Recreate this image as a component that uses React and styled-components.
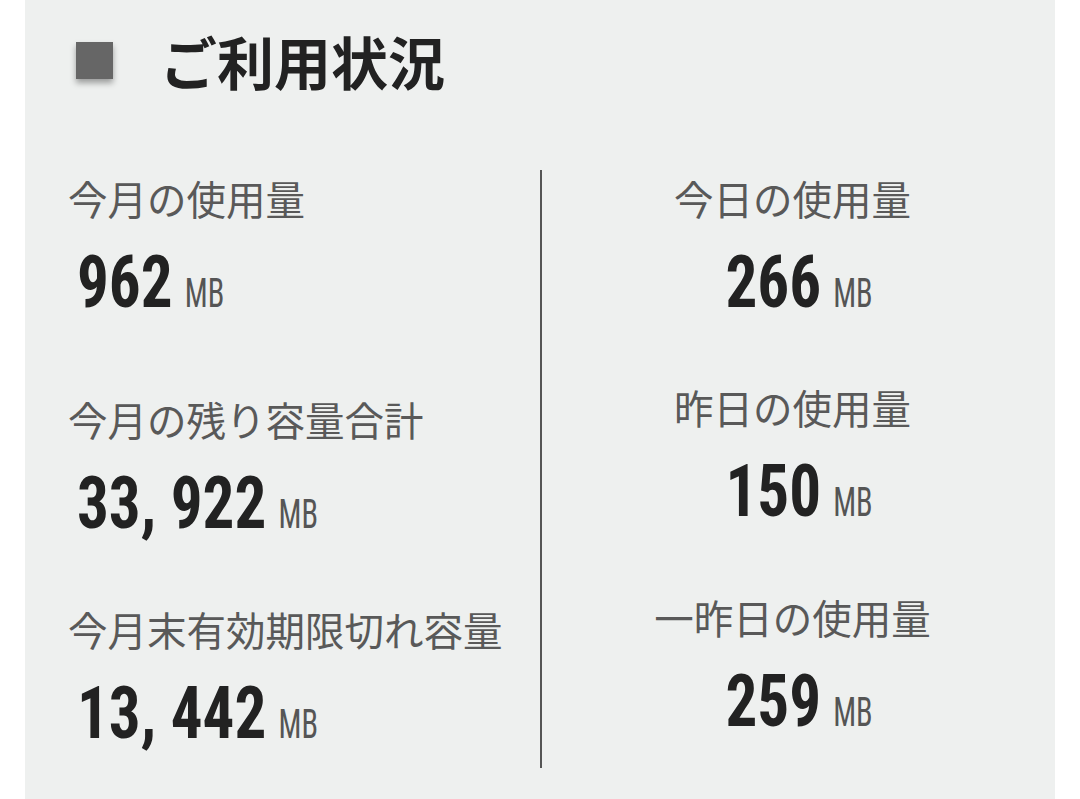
import React from 'react'
import styled, { createGlobalStyle } from 'styled-components'

const GlobalStyle = createGlobalStyle`
  html, body {
    margin: 0;
    padding: 0;
    background: #ffffff;
  }
  body {
    font-family: "Noto Sans CJK JP", "Noto Sans", sans-serif;
  }
`

const Panel = styled.div`
  margin: 0 25px;
  min-height: 799px;
  background: #eef0ef;
  box-sizing: border-box;
  padding-top: 28px;
`

const Header = styled.div`
  display: flex;
  align-items: center;
  padding-left: 51px;
  height: 64px;
`

const Square = styled.div`
  width: 37px;
  height: 37px;
  background: #666666;
  box-shadow: 0 4px 6px rgba(0, 0, 0, 0.35);
  margin-right: 47px;
`

const Title = styled.h1`
  margin: 0;
  font-size: 57px;
  line-height: 64px;
  font-weight: 700;
  color: #222222;
`

const Columns = styled.div`
  display: grid;
  grid-template-columns: 515px 1fr;
  margin-top: 78px;
  height: 598px;
`

const Column = styled.div`
  display: flex;
  flex-direction: column;
  gap: ${p => p.$gap}px;
  padding-top: 4px;
  padding-left: ${p => (p.$center ? 0 : 43)}px;
  align-items: ${p => (p.$center ? 'center' : 'flex-start')};
  border-left: ${p => (p.$divider ? '2px solid #555555' : 'none')};
`

const Item = styled.div`
  display: flex;
  flex-direction: column;
  align-items: ${p => (p.$center ? 'center' : 'flex-start')};
  margin-top: ${p => p.$extra || 0}px;
`

const Label = styled.div`
  font-size: 39.5px;
  line-height: 48px;
  height: 48px;
  color: #595959;
  white-space: nowrap;
  margin-right: ${p => (p.$center ? 12 : 0)}px;
`

const Value = styled.div`
  margin-top: 23px;
  margin-left: ${p => (p.$center ? 0 : 9)}px;
  height: 76px;
  font-family: "Roboto Condensed", Roboto, "Liberation Sans", sans-serif;
  font-size: 72px;
  line-height: 76px;
  white-space: nowrap;
  transform: scaleX(0.876);
  transform-origin: ${p => (p.$center ? 'center' : 'left')} center;
`

const Amount = styled.span`
  font-weight: 700;
  color: #222222;
`

const Unit = styled.span`
  display: inline-block;
  font-size: 41px;
  line-height: 1;
  font-weight: 400;
  color: #555555;
  margin-left: 14px;
  margin-right: -9px;
  transform: scaleX(0.845);
  transform-origin: left center;
`

const leftItems = [
  { label: '今月の使用量', value: '962' },
  { label: '今月の残り容量合計', value: '33, 922', extra: 11 },
  { label: '今月末有効期限切れ容量', value: '13, 442' },
]

const rightItems = [
  { label: '今日の使用量', value: '266' },
  { label: '昨日の使用量', value: '150' },
  { label: '一昨日の使用量', value: '259', extra: 1 },
]

const Stat = ({ label, value, extra, center }) => (
  <Item $center={center} $extra={extra}>
    <Label $center={center}>{label}</Label>
    <Value $center={center}>
      <Amount>{value}</Amount>
      <Unit>MB</Unit>
    </Value>
  </Item>
)

export default function App() {
  return (
    <>
      <GlobalStyle />
      <Panel>
        <Header>
          <Square />
          <Title>ご利用状況</Title>
        </Header>
        <Columns>
          <Column $gap={63}>
            {leftItems.map(it => (
              <Stat key={it.label} {...it} />
            ))}
          </Column>
          <Column $gap={62} $center $divider>
            {rightItems.map(it => (
              <Stat key={it.label} {...it} center />
            ))}
          </Column>
        </Columns>
      </Panel>
    </>
  )
}
